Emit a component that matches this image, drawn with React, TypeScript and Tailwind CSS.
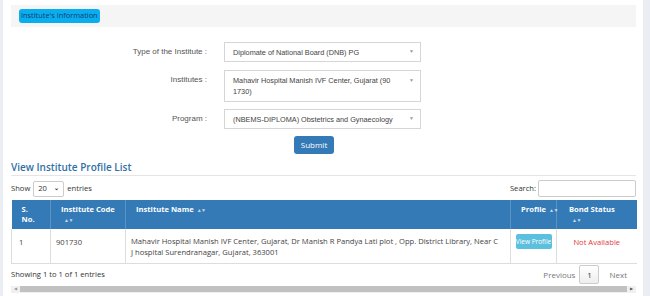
import React from "react"

const sortIcon = <span className="ml-[3px] text-[5px] tracking-[-0.5px] opacity-70">▲▼</span>

function FakeSelect({ children, tall }: { children: React.ReactNode; tall?: boolean }) {
  return (
    <div
      className={`w-[197px] border border-[#d5d5d5] bg-white flex justify-between pl-[8px] pr-[6px] ${
        tall ? "items-start py-[4px]" : "h-[20px] items-center"
      }`}
    >
      <span className="text-[7.3px] leading-[11px] text-[#444]">{children}</span>
      <span className={`text-[5px] text-[#999] ${tall ? "mt-[2px]" : ""}`}>▼</span>
    </div>
  )
}

function FormRow({ label, children }: { label: string; children: React.ReactNode }) {
  return (
    <div className="flex items-start">
      <div className="w-[196px] text-right text-[8px] leading-[20px] text-[#555]">{label}</div>
      <div className="ml-[17px]">{children}</div>
    </div>
  )
}

export default function App() {
  return (
    <main className="w-[650px] h-[296px] bg-[#eaedf1] flex overflow-hidden" style={{ fontFamily: "'Liberation Sans', Arial, sans-serif" }}>
      <div className="ml-[3px] w-[640px] bg-white pl-[8px] pr-[7px] pt-[5px]">
        {/* panel header */}
        <div className="h-[22px] bg-[#f5f5f5] flex items-center pl-[8px]">
          <span className="bg-[#0aaef0] rounded-[3px] px-[2px] h-[14px] flex items-center text-[7.4px] text-[#123b6b]" style={{ fontFamily: "'Open Sans', sans-serif" }}>
            Institute's Information
          </span>
        </div>

        {/* form */}
        <div className="mt-[15px] flex flex-col gap-[7px]">
          <FormRow label="Type of the Institute :">
            <FakeSelect>Diplomate of National Board (DNB) PG</FakeSelect>
          </FormRow>
          <div className="mt-[1px]">
            <FormRow label="Institutes :">
              <FakeSelect tall>
                Mahavir Hospital Manish IVF Center, Gujarat (90
                <br />
                1730)
              </FakeSelect>
            </FormRow>
          </div>
          <FormRow label="Program :">
            <FakeSelect>(NBEMS-DIPLOMA) Obstetrics and Gynaecology</FakeSelect>
          </FormRow>
        </div>
        <div className="mt-[7px] flex pl-[283px]">
          <button className="bg-[#337ab7] text-white text-[8px] rounded-[3px] h-[18px] w-[40px]" style={{ fontFamily: "'Open Sans', sans-serif" }}>
            Submit
          </button>
        </div>

        {/* list */}
        <div style={{ fontFamily: "'Open Sans', sans-serif" }}>
          <h2 className="mt-[6px] text-[10px] font-semibold text-[#2f6fa8] leading-[14px]">View Institute Profile List</h2>
          <div className="border-t border-[#e5e5e5] mt-[1px]" />
          <div className="flex items-center justify-between mt-[4px] h-[17px] text-[7.6px] text-[#333]">
            <div className="flex items-center gap-[3px]">
              <span>Show</span>
              <div className="w-[31px] h-[16px] border border-[#ccc] rounded-[2px] flex items-center justify-between px-[4px]">
                <span>20</span>
                <span className="text-[6px] font-bold">⌄</span>
              </div>
              <span>entries</span>
            </div>
            <div className="flex items-center gap-[2px]">
              <span>Search:</span>
              <div className="w-[98px] h-[17px] border border-[#ccc] rounded-[2px]" />
            </div>
          </div>

          <table className="mt-[3px] w-[625px] border-collapse text-[7.6px] table-fixed">
            <thead>
              <tr className="bg-[#337ab7] text-white font-bold align-top text-left">
                <th className="w-[39px] pl-[10px] pt-[4px] h-[29px] border-r border-[#5b93c4] leading-[10px]">S.<br />No.</th>
                <th className="w-[75px] pl-[10px] pt-[4px] border-r border-[#5b93c4] leading-[10px]">Institute Code<br />{sortIcon}</th>
                <th className="w-[385px] pl-[10px] pt-[4px] border-r border-[#5b93c4] leading-[10px]">Institute Name{sortIcon}</th>
                <th className="w-[46px] pl-[10px] pt-[4px] border-r border-[#5b93c4] leading-[10px] whitespace-nowrap">Profile{sortIcon}</th>
                <th className="w-[80px] pl-[12px] pt-[4px] leading-[10px]">Bond Status<br />{sortIcon}</th>
              </tr>
            </thead>
            <tbody>
              <tr className="align-top text-[#444] border-b border-[#ddd]">
                <td className="pl-[7px] pt-[8px] h-[34px] border-l border-r border-[#ddd]">1</td>
                <td className="pl-[5px] pt-[8px] border-r border-[#ddd]">901730</td>
                <td className="pl-[5px] pt-[7px] border-r border-[#ddd] leading-[11px] whitespace-nowrap overflow-hidden">
                  Mahavir Hospital Manish IVF Center, Gujarat, Dr Manish R Pandya Lati plot , Opp. District Library, Near C
                  <br />
                  J hospital Surendranagar, Gujarat, 363001
                </td>
                <td className="pt-[5px] border-r border-[#ddd] text-center">
                  <span className="inline-block bg-[#5bc0de] text-white rounded-[2px] w-[36px] h-[15px] leading-[15px] text-[6.5px] whitespace-nowrap">View Profile</span>
                </td>
                <td className="pt-[8px] text-center text-[#e0393e]">Not Available</td>
              </tr>
            </tbody>
          </table>

          <div className="flex items-center justify-between h-[22px] text-[7.6px] text-[#333]">
            <span>Showing 1 to 1 of 1 entries</span>
            <div className="flex items-center text-[8px]">
              <span className="text-[#777] mr-[4px]">Previous</span>
              <span className="w-[20px] h-[19px] border border-[#ccc] rounded-[2px] bg-gradient-to-b from-white to-[#eee] flex items-center justify-center text-[#333]">1</span>
              <span className="text-[#777] ml-[10px] mr-[9px]">Next</span>
            </div>
          </div>
          <div className="h-[7px] bg-[#f0f0f0] flex items-center">
            <span className="text-[4px] text-[#999] w-[9px] text-center">◀</span>
            <div className="flex-1 h-[6px] bg-[#c1c1c1]" />
            <span className="text-[4px] text-[#555] w-[9px] text-center">▶</span>
          </div>
        </div>
      </div>
    </main>
  )
}
